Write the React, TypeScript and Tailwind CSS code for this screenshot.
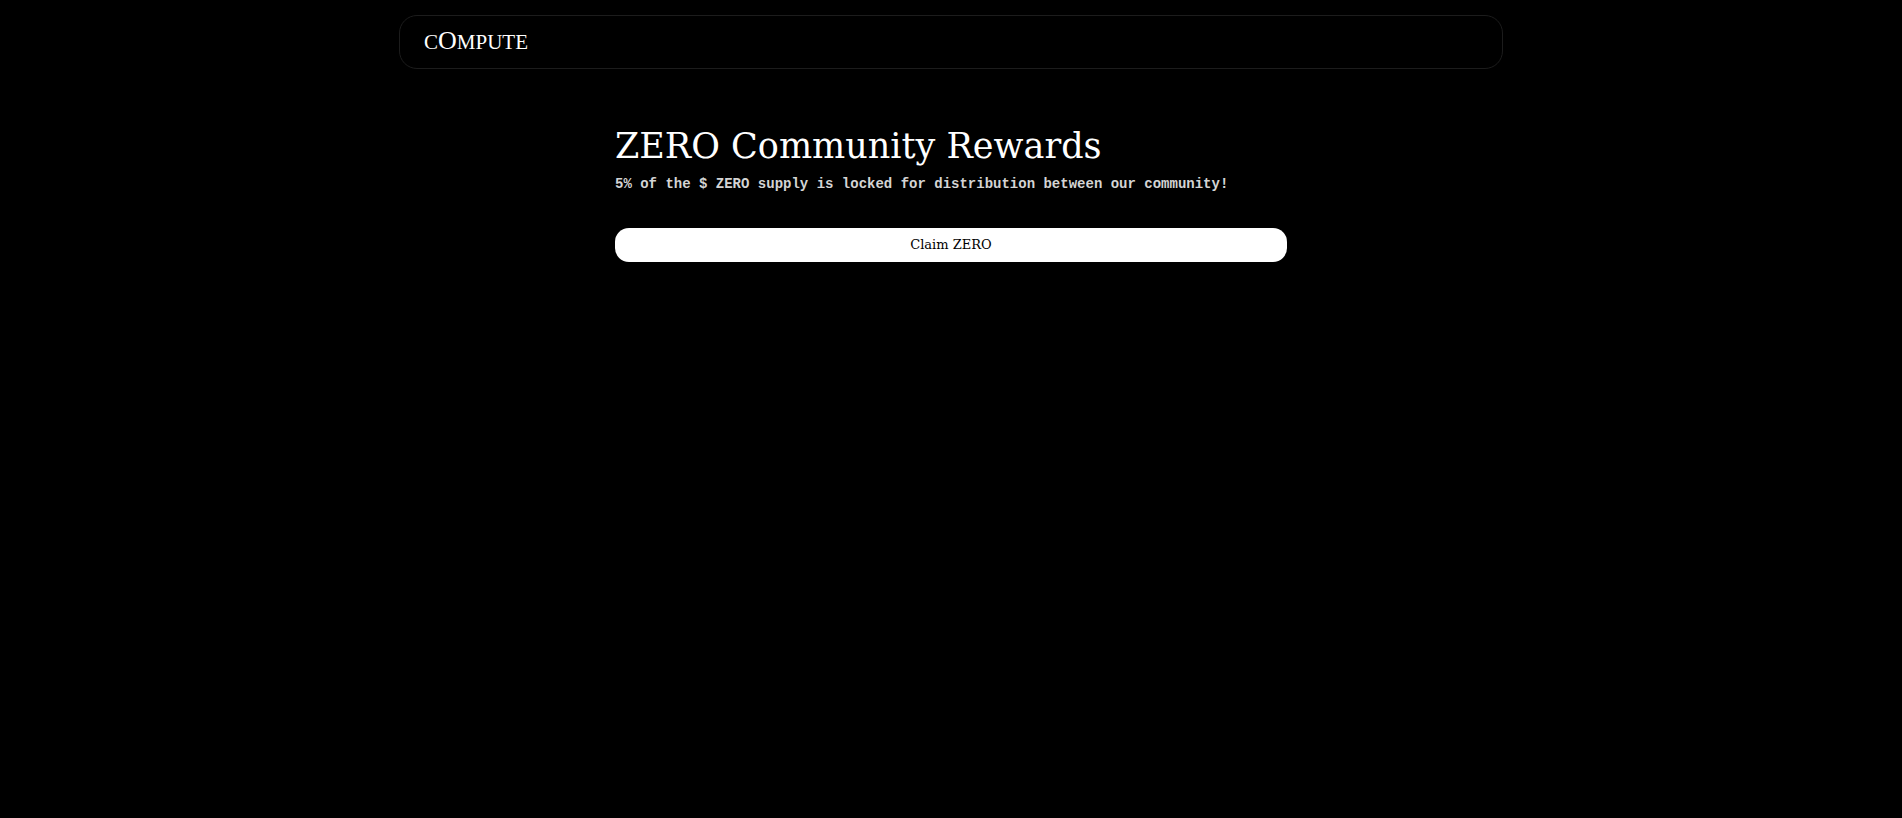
import React from 'react';

const Header: React.FC = () => (
  <header className="mx-auto mt-[15px] flex h-[54px] w-full max-w-[1104px] items-center rounded-[18px] border border-[#1c1c1c] px-6 pb-[2px]">
    <a
      href="/"
      className="flex items-baseline font-['Liberation_Serif',serif] text-[21px] leading-6 text-white"
    >
      C<span className="text-[26px]">O</span>MPUTE
    </a>
  </header>
);

const Rewards: React.FC = () => (
  <main className="mx-auto mt-[54px] w-full max-w-2xl">
    <h1 className="font-['DejaVu_Serif',serif] text-[35px] leading-[46px] text-white">
      ZERO Community Rewards
    </h1>
    <p className="mt-[5px] font-['Liberation_Mono',monospace] text-sm font-bold leading-5 text-[#d4d4d4]">
      5% of the $ ZERO supply is locked for distribution between our community!
    </p>
    <button
      type="button"
      className="mt-[34px] flex h-[34px] w-full cursor-pointer items-center justify-center rounded-[14px] bg-white font-['DejaVu_Serif',serif] text-[13px] leading-5 text-black"
    >
      Claim ZERO
    </button>
  </main>
);

export default function App() {
  return (
    <div className="flow-root min-h-screen bg-black">
      <Header />
      <Rewards />
    </div>
  );
}
